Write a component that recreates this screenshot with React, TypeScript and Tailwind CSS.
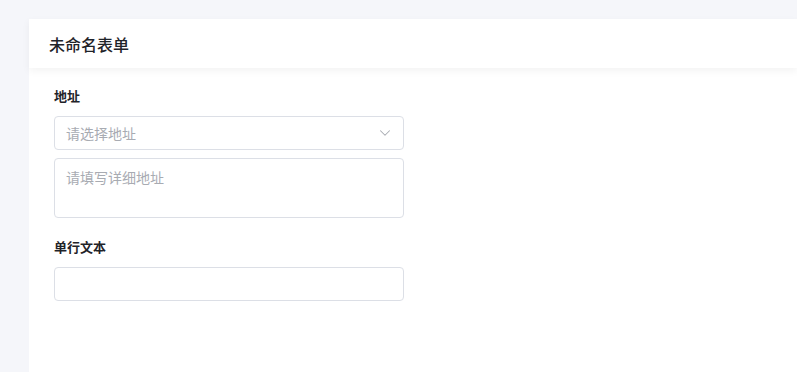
import { ChevronDown } from "lucide-react";

export default function App() {
  return (
    <div
      className="h-[372px] w-[797px] overflow-hidden bg-[#f5f6fa] pl-[29px] pt-[19px]"
      style={{ fontFamily: '"Noto Sans CJK SC", "Noto Sans", sans-serif' }}
    >
      <div className="h-full bg-white">
        <div className="relative z-10 flex h-[49px] items-center bg-white px-5 shadow-[0_3px_8px_rgba(0,0,0,0.05)]">
          <h1 className="text-[16px] font-medium text-[#1f2329]">未命名表单</h1>
        </div>

        <div className="flex w-[375px] flex-col pl-[25px] pt-[18px]">
          <label className="text-[13px] font-semibold leading-5 text-[#1f2329]">地址</label>
          <div className="mt-[10px] flex h-[34px] items-center justify-between rounded border border-[#dcdfe6] pl-[11px] pr-[9px]">
            <span className="text-[14px] text-[#a8abb2]">请选择地址</span>
            <ChevronDown className="h-[18px] w-[18px] text-[#a8abb2]" strokeWidth={1.4} />
          </div>
          <div className="mt-2 h-[60px] rounded border border-[#dcdfe6] px-[11px] pt-[5px]">
            <span className="text-[14px] text-[#a8abb2]">请填写详细地址</span>
          </div>

          <label className="mt-[19px] text-[13px] font-semibold leading-5 text-[#1f2329]">单行文本</label>
          <div className="mt-[10px] h-[34px] rounded border border-[#dcdfe6]" />
        </div>
      </div>
    </div>
  );
}
